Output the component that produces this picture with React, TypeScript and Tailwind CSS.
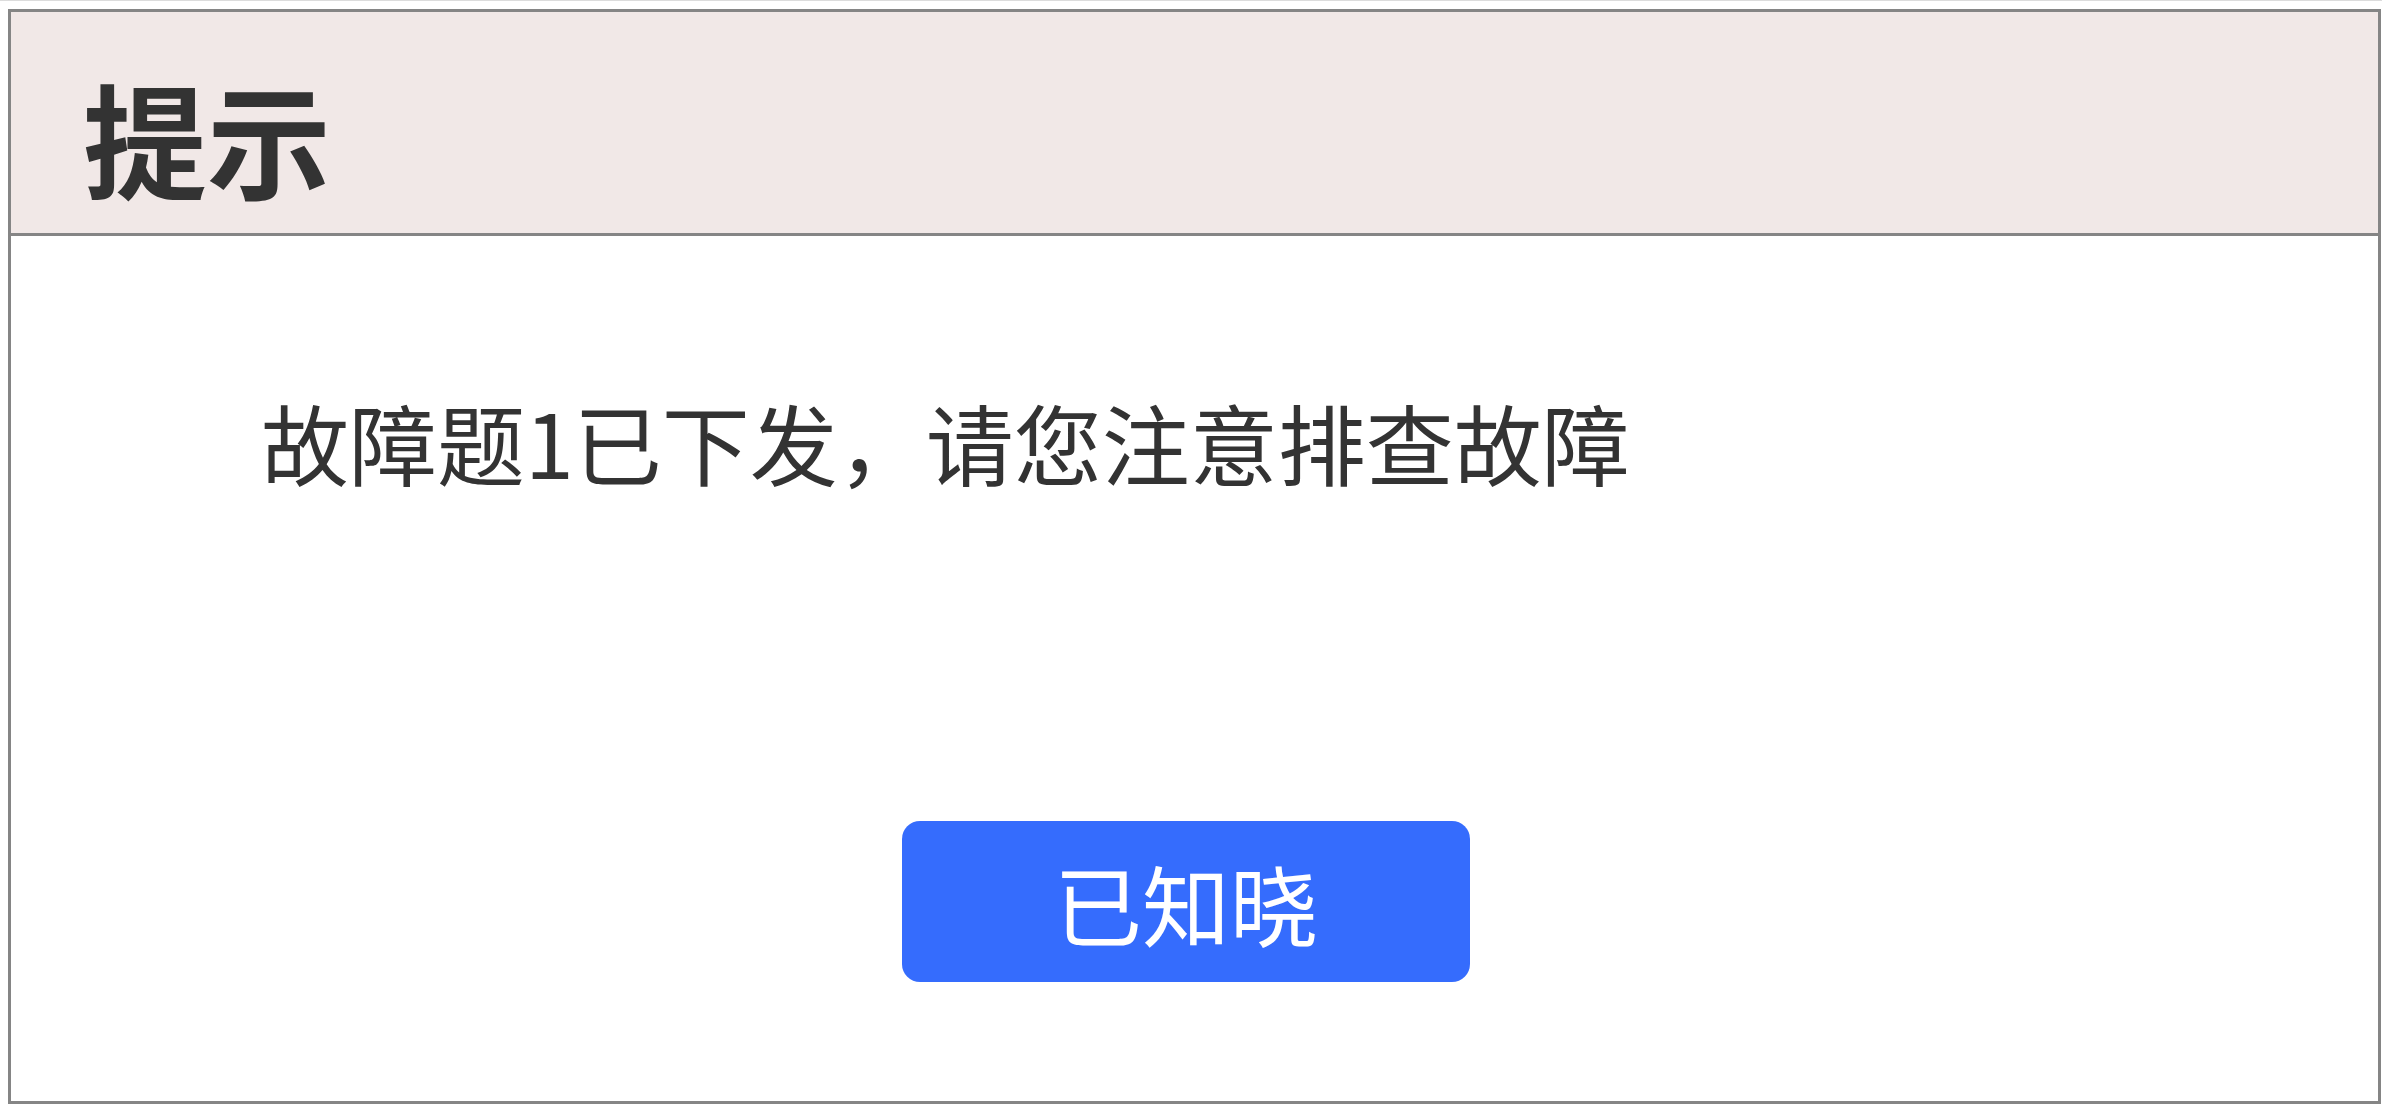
export default function App() {
  return (
    <div
      className="w-[2382px] h-[1104px] bg-white border-t border-[#dcdcdc] overflow-hidden"
      style={{ fontFamily: '"Noto Sans CJK SC", "Noto Sans", sans-serif' }}
    >
      <div className="ml-[8px] mt-[8px] w-[2373px] h-[1095px] border-[3px] border-[#858585] flex flex-col">
        <div className="h-[224px] bg-[#f1e8e7] border-b-[3px] border-[#858585] flex items-center pl-[72px] pt-[26px] shrink-0">
          <span className="text-[124px] leading-none font-bold text-[#333333]">提示</span>
        </div>
        <div className="flex flex-col pt-[161px]">
          <p className="pl-[250px] text-[88px] leading-none text-[#333333]">
            故障题1已下发，请您注意排查故障
          </p>
          <div className="pl-[891px] mt-[336px]">
            <button className="w-[568px] h-[161px] rounded-[18px] bg-[#356cfd] text-white text-[88px] leading-none flex items-center justify-center">
              已知晓
            </button>
          </div>
        </div>
      </div>
    </div>
  );
}
